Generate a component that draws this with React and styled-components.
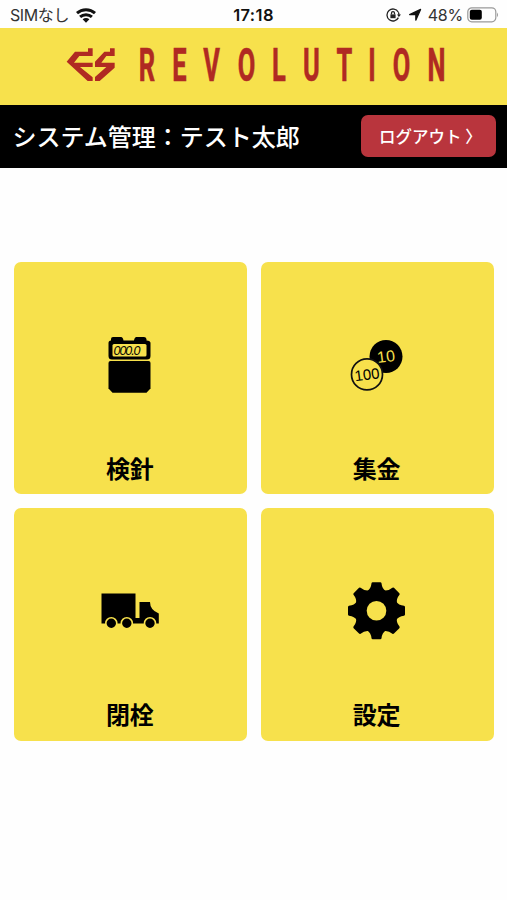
import React from 'react';
import styled, { createGlobalStyle } from 'styled-components';

const colors = {
    yellow: '#f7e14c',
    logo: '#b02a22',
    logout: '#b9353d',
};

const GlobalStyle = createGlobalStyle`
    * {
        box-sizing: border-box;
    }

    body {
        margin: 0;
        background: #fefefe;
        color: #000;
        font-family: "Liberation Sans", "Noto Sans CJK JP", sans-serif;
    }
`;

const Screen = styled.div`
    min-height: 900px;
    display: flex;
    flex-direction: column;
`;

const StatusBar = styled.div`
    height: 28px;
    padding: 2px 8px 0 10px;
    display: grid;
    grid-template-columns: 1fr auto 1fr;
    align-items: center;
    font-family: Inter, "Noto Sans CJK JP", sans-serif;
    font-size: 16px;
    line-height: 26px;
    color: #333;
`;

const StatusGroup = styled.div`
    display: flex;
    align-items: center;
    justify-content: ${({ $end }) => ($end ? 'flex-end' : 'flex-start')};
    white-space: nowrap;
`;

const Carrier = styled.span`
    margin-right: 7px;
    letter-spacing: -0.4px;
`;

const Clock = styled.div`
    padding-right: 2px;
    font-size: 16.5px;
    font-weight: 600;
    letter-spacing: 0.4px;
    color: #111;
`;

const Percent = styled.span`
    margin: 0 4px 0 6px;
    letter-spacing: -0.2px;
`;

const LogoBar = styled.div`
    height: 77px;
    background: ${colors.yellow};
`;

const Header = styled.header`
    height: 63px;
    padding: 0 11px 0 12.5px;
    display: flex;
    align-items: center;
    justify-content: space-between;
    background: #000;
    color: #fff;
    font-family: "Noto Sans CJK JP", sans-serif;
`;

const UserName = styled.h1`
    margin: 0 0 2px;
    font-size: 24px;
    font-weight: 500;
    line-height: 32px;
`;

const LogoutButton = styled.button`
    width: 135px;
    height: 42px;
    margin-bottom: 1px;
    padding: 0 0 1px 18px;
    border: 0;
    border-radius: 7px;
    background: ${colors.logout};
    color: #fff;
    font-family: inherit;
    font-size: 16.5px;
    font-weight: 500;
    text-align: left;
    white-space: nowrap;
`;

const Menu = styled.main`
    padding: 94px 13.5px 0 14px;
    display: grid;
    grid-template-columns: 1fr 1fr;
    grid-auto-rows: 232.4px;
    gap: 14px;
`;

const Card = styled.div`
    padding-bottom: 10.5px;
    border-radius: 7px;
    background: ${colors.yellow};
    display: flex;
    flex-direction: column;
    align-items: center;
`;

const CardIcon = styled.div`
    height: 60px;
    margin-top: 73px;

    svg {
        display: block;
    }
`;

const CardLabel = styled.div`
    margin-top: auto;
    padding-right: 1px;
    font-family: "Noto Sans CJK JP", sans-serif;
    font-size: 24px;
    font-weight: 700;
    line-height: 32px;
`;

const WifiIcon = () => (
    <svg width="20" height="15" viewBox="0 0 20 15" fill="none" stroke="#111" strokeWidth="3">
        <path d="M1 5.2C6 .6 14 .6 19 5.2" />
        <path d="M4.1 8.9C7.4 5.9 12.6 5.9 15.9 8.9" />
        <path d="M6.6 11.3C8.6 9.5 11.4 9.5 13.4 11.3L10 14.8z" fill="#111" stroke="none" />
    </svg>
);

const LockIcon = () => (
    <svg width="15" height="14" viewBox="0 0 15 14" fill="none" stroke="#222" strokeWidth="1.3">
        <path d="M12.2 4A6 6 0 1 0 12.4 9.6" />
        <path d="M12.4 4.2Q13.3 6 12.8 8" />
        <path d="M11 6.4H15L12.8 9z" fill="#222" stroke="none" />
        <path d="M4.4 6.4H9.6V10.2H4.4z" fill="#222" stroke="none" />
        <path d="M5.5 6.5V5.2a1.5 1.5 0 0 1 3 0V6.5" />
    </svg>
);

const ArrowButton = styled.svg`
    margin-left: 7px;
`;

const ArrowIcon = () => (
    <ArrowButton width="14" height="14" viewBox="0 0 14 14">
        <path
            d="M12.6 1.4L7.8 12.2V6.6H1.6z"
            fill="#111"
            stroke="#111"
            strokeWidth="1.2"
            strokeLinejoin="round"
        />
    </ArrowButton>
);

const BatteryIcon = () => (
    <svg width="32" height="16" viewBox="0 0 32 16">
        <rect x=".8" y=".8" width="28" height="14" rx="4" fill="none" stroke="#999" strokeWidth="1.2" />
        <rect x="2.8" y="2.8" width="12" height="10" rx="2" />
        <path d="M30 5.4Q32 7.8 30 10.2z" fill="#999" />
    </svg>
);

// centre of every letter, in logo pixels
const letterCenters = [147, 179.5, 211.5, 246.5, 279, 311.5, 344.5, 372, 401.5, 436.5];
const squeeze = 0.56;

const Logo = () => (
    <svg width="507" height="77" viewBox="0 28 507 77" fill={colors.logo}>
        <g transform="translate(50 35) scale(.3333)">
            <path d="M50 80L75 50H114V40H128V63H88L72 83H128V96H90L128 127V138H113z" />
            <path d="M135 80L163 50H180V40H194V63H169L154 83H194V98L149 138H135V126L169 96H135z" />
        </g>
        <text
            transform={`scale(${squeeze} 1)`}
            x={letterCenters.map(x => x / squeeze).join(' ')}
            y="80.7"
            textAnchor="middle"
            fontFamily="Roboto, sans-serif"
            fontSize="45.5"
            fontWeight="700"
            stroke={colors.logo}
            strokeWidth=".6"
        >
            REVOLUTION
        </text>
    </svg>
);

const MeterIcon = () => (
    <svg width="60" height="60" viewBox="0 0 60 60">
        <path d="M8.5 8Q8.5 5.5 11 5.5V4Q11 2 13 2H21Q23 2 23.5 5.5H34Q34.5 2 36.5 2H44Q46 2 46.5 4V5.5Q50.5 5.5 50.5 8V21Q50.5 24.5 47 24.5H12Q8.5 24.5 8.5 21z" />
        <rect x="12.5" y="9" width="34" height="12.5" rx="1.5" fill={colors.yellow} />
        <text
            x="13.5"
            y="19.8"
            fontFamily="Liberation Sans, sans-serif"
            fontSize="12.5"
            fontStyle="italic"
            textLength="27"
            lengthAdjust="spacing"
        >
            000.0
        </text>
        <path d="M10.5 26H48.5Q50.5 26 50.5 28V53.5L46.5 57.7H12.5L8.5 53.5V28Q8.5 26 10.5 26z" />
    </svg>
);

const CoinsIcon = () => (
    <svg width="60" height="60" viewBox="0 0 60 60" fontFamily="Liberation Sans, sans-serif" textAnchor="middle">
        <circle cx="39" cy="21.5" r="16.5" />
        <circle cx="20" cy="39.4" r="15.5" fill={colors.yellow} stroke="#111" strokeWidth="1.7" />
        <text x="39" y="27" fontSize="16" fill={colors.yellow} transform="rotate(-7 39 21.5)">10</text>
        <text x="20" y="44.8" fontSize="15" transform="rotate(-7 20 39.4)">100</text>
    </svg>
);

const TruckIcon = () => (
    <svg width="60" height="60" viewBox="0 0 60 60">
        <path d="M1.5 12.4H35.5V37H39.5V21H50Q50 29 58.8 32.5V42.5H1.5z" />
        {[11.3, 26.8, 50].map(cx => (
            <circle key={cx} cx={cx} cy="42.2" r="5.5" stroke={colors.yellow} strokeWidth="1.6" />
        ))}
    </svg>
);

const gearTeeth = [0, 45, 90, 135, 180, 225, 270, 315];

const GearIcon = () => (
    <svg width="60" height="60" viewBox="-29.5 -29.7 60 60">
        <circle r="20.8" />
        {gearTeeth.map(angle => (
            <path
                key={angle}
                transform={`rotate(${angle})`}
                d="M-3.8 -28.5H3.8Q4.8 -28.5 5 -27.5Q5.5 -22 9.5 -19.5L0 -8L-9.5 -19.5Q-5.5 -22 -5 -27.5Q-4.8 -28.5 -3.8 -28.5z"
            />
        ))}
        <circle r="9.8" fill={colors.yellow} />
    </svg>
);

const menuItems = [
    { label: '検針', Icon: MeterIcon },
    { label: '集金', Icon: CoinsIcon },
    { label: '閉栓', Icon: TruckIcon },
    { label: '設定', Icon: GearIcon },
];

const App = () => (
    <Screen>
        <GlobalStyle />
        <StatusBar>
            <StatusGroup>
                <Carrier>SIMなし</Carrier>
                <WifiIcon />
            </StatusGroup>
            <Clock>17:18</Clock>
            <StatusGroup $end>
                <LockIcon />
                <ArrowIcon />
                <Percent>48%</Percent>
                <BatteryIcon />
            </StatusGroup>
        </StatusBar>
        <LogoBar>
            <Logo />
        </LogoBar>
        <Header>
            <UserName>システム管理：テスト太郎</UserName>
            <LogoutButton>ログアウト 〉</LogoutButton>
        </Header>
        <Menu>
            {menuItems.map(({ label, Icon }) => (
                <Card key={label}>
                    <CardIcon>
                        <Icon />
                    </CardIcon>
                    <CardLabel>{label}</CardLabel>
                </Card>
            ))}
        </Menu>
    </Screen>
);

export default App;
